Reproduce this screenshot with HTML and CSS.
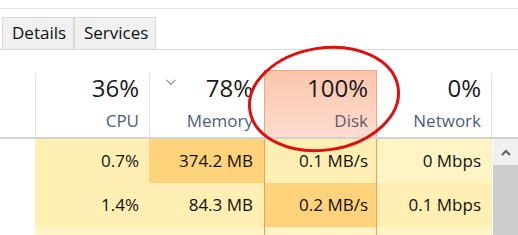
FILE: index.html
```html
<!DOCTYPE html>
<html>
<head>
<meta charset="utf-8">
<link rel="stylesheet" href="styles.css">
</head>
<body>
<div class="page">
  <div class="top"></div>
  <div class="tabbar">
    <div class="tab tab-details">Details</div>
    <div class="tab tab-services">Services</div>
  </div>
  <div class="head">
    <div class="hc"></div>
    <div class="hc hc-cpu"><div class="in in-left p-cpu"><div class="pct">36%</div><div class="lbl">CPU</div></div></div>
    <div class="hc hc-mem">
      <svg class="sort" width="10" height="7" viewBox="0 0 10 7"><polyline points="0.5,0.8 5,5.3 9.5,0.8" fill="none" stroke="#8e8e8e" stroke-width="1.2"/></svg>
      <div class="in in-left p-mem"><div class="pct">78%</div><div class="lbl">Memory</div></div>
    </div>
    <div class="hc hc-disk"><div class="in in-disk p-disk"><div class="pct">100%</div><div class="lbl lbl-disk">Disk</div></div></div>
    <div class="hc"><div class="in in-right p-net"><div class="pct">0%</div><div class="lbl">Network</div></div></div>
    <div class="hc"></div>
  </div>
  <div class="rows">
    <div class="c name"></div>
    <div class="c l1 p-cpu">0.7%</div>
    <div class="c l3 p-mem">374.2 MB</div>
    <div class="c l1 disk p-disk">0.1 MB/s</div>
    <div class="c l0 net p-net">0 Mbps</div>
    <div class="scroll">
      <div class="sbtn"><svg width="10" height="7" viewBox="0 0 10 7"><polyline points="1,6 5,2 9,6" fill="none" stroke="#606060" stroke-width="2"/></svg></div>
      <div class="thumb"></div>
    </div>

    <div class="c name"></div>
    <div class="c l1 p-cpu">1.4%</div>
    <div class="c l1 p-mem">84.3 MB</div>
    <div class="c l3 disk p-disk">0.2 MB/s</div>
    <div class="c l1 net p-net">0.1 Mbps</div>

    <div class="c name"></div>
    <div class="c l0"></div>
    <div class="c l0"></div>
    <div class="c l0 disk"></div>
    <div class="c l0 net"></div>
  </div>
  <svg class="ring" width="518" height="235" viewBox="0 0 518 235">
    <ellipse cx="324" cy="99" rx="75" ry="51" transform="rotate(-9 324 99)" fill="none" stroke="#e01010" stroke-width="3"/>
  </svg>
</div>
</body>
</html>
```
FILE: styles.css
```css
html, body {
  margin: 0;
  padding: 0;
  background: #ffffff;
}
.page {
  position: relative;
  width: 518px;
  height: 235px;
  overflow: hidden;
  font-family: "Open Sans", "Noto Sans", sans-serif;
  color: #111;
}
.top {
  height: 8px;
  border-bottom: 1px solid #e6e6e6;
}
.tabbar {
  margin-top: 8px;
  display: flex;
  padding-left: 2px;
  border-bottom: 1px solid #d9d9d9;
}
.tab {
  box-sizing: border-box;
  height: 32px;
  border: 1px solid #d9d9d9;
  border-bottom: none;
  background: #f0f0f0;
  font-size: 17px;
  line-height: 30px;
  padding-left: 9px;
  color: #111;
}
.tab-details { width: 72px; }
.tab-services { width: 82px; }

.head {
  display: grid;
  grid-template-columns: 35px 114px 115px 113px 115px 26px;
  height: 87px;
  border-bottom: 2px solid #d2d2d2;
}
.hc {
  box-sizing: border-box;
  padding-top: 23px;
  height: 87px;
}
.hc-mem { position: relative; }
.sort {
  position: absolute;
  left: 17px;
  top: 29px;
}
.in {
  box-sizing: border-box;
  height: 64px;
  text-align: right;
  padding-top: 1px;
}
.in-left { border-left: 1px solid #e2e2e2; }
.in-right { border-right: 1px solid #e2e2e2; }
.hc-disk { padding-top: 20px; }
.in-disk {
  height: 67px;
  border: 1px solid #f4a57a;
  border-bottom: none;
  background: linear-gradient(#fdc5ad, #fddccd);
  padding-top: 3px;
}
.pct {
  font-size: 24px;
  line-height: 28px;
  color: #1a1a1a;
}
.lbl {
  font-size: 17px;
  line-height: 20px;
  margin-top: 9px;
  color: #4a5f7d;
}
.lbl-disk { color: #5e5a70; }

.p-cpu { padding-right: 10px; }
.p-mem { padding-right: 11px; }
.p-disk { padding-right: 8px; }
.p-net { padding-right: 10px; }

.rows {
  display: grid;
  grid-template-columns: 35px 114px 115px 113px 115px 26px;
  grid-template-rows: 44px 44px 44px;
}
.c {
  box-sizing: border-box;
  font-size: 17px;
  line-height: 44px;
  text-align: right;
  color: #111;
  white-space: nowrap;
}
.name { background: #ffffff; }
.l0 { background: #fff4c4; }
.l1 { background: #ffefb2; }
.l3 { background: #ffd37c; }
.disk {
  border-left: 1px solid #f59a63;
  border-right: 1px solid #f59a63;
}
.net { border-right: 1px solid #f8ecc8; }
.scroll {
  grid-column: 6;
  grid-row: 1 / 4;
  display: flex;
  flex-direction: column;
  padding-left: 1px;
  background: #ffffff;
}
.sbtn {
  height: 26px;
  background: #f0f0f0;
  display: flex;
  align-items: center;
  justify-content: center;
}
.thumb {
  flex: 1;
  background: #cdcdcd;
}
.ring {
  position: absolute;
  left: 0;
  top: 0;
  pointer-events: none;
}
```
